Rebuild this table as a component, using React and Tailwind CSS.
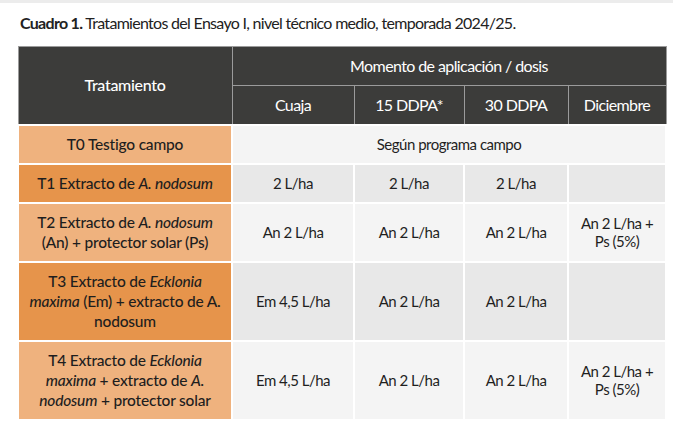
import React from "react";

const rows = [
  {
    name: <>T0 Testigo campo</>,
    tone: "light",
    h: "h-[39px]",
    span: "Según programa campo",
  },
  {
    name: (
      <>
        T1 Extracto de <i>A. nodosum</i>
      </>
    ),
    tone: "dark",
    h: "h-[39px]",
    cells: ["2 L/ha", "2 L/ha", "2 L/ha", ""],
  },
  {
    name: (
      <>
        T2 Extracto de <i>A. nodosum</i>
        <br />
        (An) + protector solar (Ps)
      </>
    ),
    tone: "light",
    h: "h-[59px]",
    cells: ["An 2 L/ha", "An 2 L/ha", "An 2 L/ha", "An 2 L/ha +\nPs (5%)"],
  },
  {
    name: (
      <>
        T3 Extracto de <i>Ecklonia</i>
        <br />
        <i>maxima</i> (Em) + extracto de A.
        <br />
        nodosum
      </>
    ),
    tone: "dark",
    h: "h-[79px]",
    cells: ["Em 4,5 L/ha", "An 2 L/ha", "An 2 L/ha", ""],
  },
  {
    name: (
      <>
        T4 Extracto de <i>Ecklonia</i>
        <br />
        <i>maxima</i> + extracto de <i>A.</i>
        <br />
        <i>nodosum</i> + protector solar
      </>
    ),
    tone: "light",
    h: "h-[79px]",
    cells: ["Em 4,5 L/ha", "An 2 L/ha", "An 2 L/ha", "An 2 L/ha +\nPs (5%)"],
  },
];

const App = () => {
  return (
    <div className="w-[680px] h-[436px] bg-white font-['Lato',sans-serif] text-[#1f1f1f]">
      <div className="h-[3px] w-[673px] bg-[#ececec]"></div>
      <p className="pl-[20px] pt-[11px] text-[16px] leading-[18px] tracking-[-0.7px] text-[#222]">
        <span className="font-bold">Cuadro 1.</span> Tratamientos del Ensayo I, nivel técnico medio, temporada 2024/25.
      </p>
      <table className="ml-[17px] mt-[14px] w-[648px] border-collapse table-fixed text-center">
        <colgroup>
          <col className="w-[214px]" />
          <col className="w-[122px]" />
          <col className="w-[110px]" />
          <col className="w-[104px]" />
          <col className="w-[98px]" />
        </colgroup>
        <thead className="bg-[#3c3c3a] text-white">
          <tr className="h-[39px]">
            <th
              rowSpan={2}
              className="border-[1.5px] border-[#9b9b9b] font-medium text-[16px] tracking-[-0.3px]"
            >
              Tratamiento
            </th>
            <th
              colSpan={4}
              className="border-[1.5px] border-[#9b9b9b] font-normal text-[16px] tracking-[-0.6px]"
            >
              Momento de aplicación / dosis
            </th>
          </tr>
          <tr className="h-[39px]">
            {["Cuaja", "15 DDPA*", "30 DDPA", "Diciembre"].map((t) => (
              <th
                key={t}
                className="border-[1.5px] border-[#9b9b9b] font-normal text-[16px] tracking-[-0.6px]"
              >
                {t}
              </th>
            ))}
          </tr>
        </thead>
        <tbody>
          {rows.map((r, i) => (
            <tr key={i} className={r.h}>
              <td
                className={
                  "border-2 border-white text-[15.5px] leading-[20px] font-medium tracking-[-0.2px] text-[#1e1e1e] " +
                  (r.tone === "light" ? "bg-[#efb27e]" : "bg-[#e6944b]")
                }
              >
                {r.name}
              </td>
              {r.span ? (
                <td
                  colSpan={4}
                  className="border-2 border-white bg-[#f4f4f4] text-[15px] tracking-[-0.5px]"
                >
                  {r.span}
                </td>
              ) : (
                r.cells.map((c, j) => (
                  <td
                    key={j}
                    className={
                      "border-2 border-white text-[15px] leading-[18px] tracking-[-0.5px] whitespace-pre-line " +
                      (r.tone === "light" ? "bg-[#f4f4f4]" : "bg-[#e8e8e8]")
                    }
                  >
                    {c}
                  </td>
                ))
              )}
            </tr>
          ))}
        </tbody>
      </table>
    </div>
  );
};

export default App;
